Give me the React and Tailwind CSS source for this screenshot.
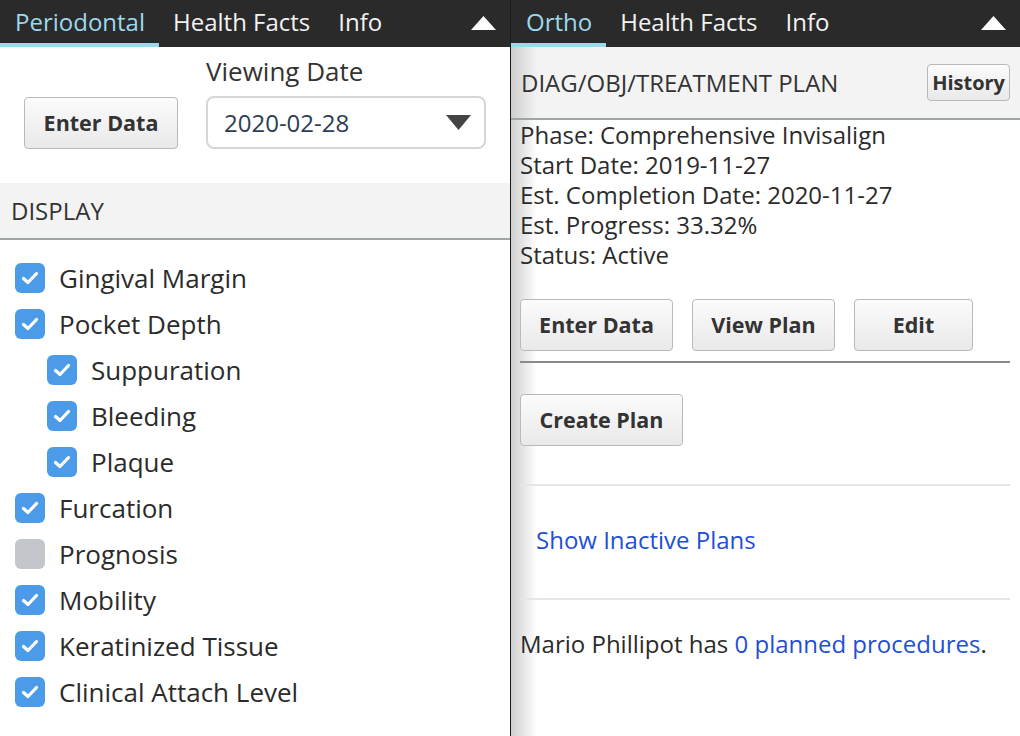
import React from "react";

const font = { fontFamily: "'Open Sans', 'Noto Sans', sans-serif" };

function Tab({ label, active, first }) {
  return (
    <div
      className={`flex h-full items-center border-b-4 ${first ? "pl-[15px] pr-[14px]" : "px-[14px]"} ${
        active ? "border-[#9dd8ec] text-[#9dd8ec]" : "border-transparent text-[#f2f2f2]"
      }`}
    >
      <span className="text-[24px] leading-none">{label}</span>
    </div>
  );
}

function TabBar({ tabs }) {
  return (
    <div className="flex h-[47px] shrink-0 items-stretch bg-[#2a2a2a]">
      {tabs.map((t, i) => (
        <Tab key={t} label={t} active={i === 0} first={i === 0} />
      ))}
      <div className="ml-auto flex items-center pb-[2px] pr-[14px]">
        <svg width="25" height="14" viewBox="0 0 25 14">
          <polygon points="12.5,0 25,14 0,14" fill="#ffffff" />
        </svg>
      </div>
    </div>
  );
}

function Btn({ children, className = "" }) {
  return (
    <button
      className={`shrink-0 rounded-[4px] border border-[#b9b9b9] bg-[linear-gradient(to_bottom,#fbfbfb,#e9e9e9)] text-[21.5px] font-bold text-[#333] ${className}`}
    >
      {children}
    </button>
  );
}

function Check({ checked }) {
  return (
    <span
      className={`flex h-[30px] w-[30px] shrink-0 items-center justify-center rounded-[6px] ${
        checked ? "bg-[#4b9be9]" : "bg-[#c3c7cb]"
      }`}
    >
      {checked && (
        <svg width="18" height="14" viewBox="0 0 18 14">
          <path d="M2.5 7.5 L7 11.5 L15.5 2.5" fill="none" stroke="#fff" strokeWidth="3.2" strokeLinecap="round" strokeLinejoin="round" />
        </svg>
      )}
    </span>
  );
}

const items = [
  ["Gingival Margin", true, false],
  ["Pocket Depth", true, false],
  ["Suppuration", true, true],
  ["Bleeding", true, true],
  ["Plaque", true, true],
  ["Furcation", true, false],
  ["Prognosis", false, false],
  ["Mobility", true, false],
  ["Keratinized Tissue", true, false],
  ["Clinical Attach Level", true, false],
];

function LeftPanel() {
  return (
    <div className="flex w-[510px] shrink-0 flex-col bg-white">
      <TabBar tabs={["Periodontal", "Health Facts", "Info"]} />
      <div className="flex shrink-0 items-end gap-[28px] pl-[24px] pt-[6px]">
        <Btn className="h-[52px] w-[154px]">Enter Data</Btn>
        <div className="flex flex-col">
          <div className="mb-[7px] text-[26px] leading-[36px] text-[#333]">Viewing Date</div>
          <div className="flex h-[53px] w-[280px] items-center justify-between rounded-[8px] border-2 border-[#d6d6d6] bg-white pl-[16px] pr-[13px]">
            <span className="text-[24px] text-[#2c3e55]">2020-02-28</span>
            <svg width="25" height="15" viewBox="0 0 25 15">
              <polygon points="0,0 25,0 12.5,15" fill="#444" />
            </svg>
          </div>
        </div>
      </div>
      <div className="mt-[34px] flex h-[57px] shrink-0 items-center border-b-2 border-[#9ba7a6] bg-[#f3f3f3] pl-[11px]">
        <span className="text-[24px] text-[#333]">DISPLAY</span>
      </div>
      <div className="flex shrink-0 flex-col pt-[15px]">
        {items.map(([label, checked, indent]) => (
          <div
            key={label}
            className={`flex h-[46px] items-center gap-[14px] ${indent ? "pl-[47px]" : "pl-[15px]"}`}
          >
            <Check checked={checked} />
            <span className="text-[26px] leading-none text-[#2b2b2b]">{label}</span>
          </div>
        ))}
      </div>
    </div>
  );
}

function RightPanel() {
  return (
    <div className="flex flex-1 flex-col border-l border-[#1c1c1c] bg-[linear-gradient(to_right,#cfcfcf,#ffffff_26px)]">
      <TabBar tabs={["Ortho", "Health Facts", "Info"]} />
      <div className="flex h-[73px] shrink-0 items-center justify-between border-b-2 border-[#9ba7a6] bg-[linear-gradient(to_right,#cdcdcd,#f3f3f3_26px)] pl-[10px] pr-[10px]">
        <span className="text-[24px] text-[#333]">DIAG/OBJ/TREATMENT PLAN</span>
        <button className="h-[37px] rounded-[4px] border border-[#b9b9b9] bg-[linear-gradient(to_bottom,#fbfbfb,#e9e9e9)] px-[4px] text-[20px] font-bold leading-none text-[#333]">
          History
        </button>
      </div>
      <div className="flex flex-col pl-[9px] pr-[10px] text-[24px] leading-[30px] text-[#2b2b2b]">
        <div>Phase: Comprehensive Invisalign</div>
        <div>Start Date: 2019-11-27</div>
        <div>Est. Completion Date: 2020-11-27</div>
        <div>Est. Progress: 33.32%</div>
        <div>Status: Active</div>
        <div className="mt-[29px] flex gap-[19px]">
          <Btn className="h-[52px] w-[153px]">Enter Data</Btn>
          <Btn className="h-[52px] w-[143px]">View Plan</Btn>
          <Btn className="h-[52px] w-[119px]">Edit</Btn>
        </div>
        <div className="mt-[10px] h-[2px] bg-[#8a8a8a]" />
        <div className="mt-[31px] flex">
          <Btn className="h-[52px] w-[163px]">Create Plan</Btn>
        </div>
        <div className="mt-[38px] h-[2px] bg-[#e3e7ea]" />
        <div className="flex h-[112px] items-center pb-[4px] pl-[16px] text-[#1f4fd6]">Show Inactive Plans</div>
        <div className="h-[2px] bg-[#e3e7ea]" />
        <div className="flex h-[92px] items-center pb-[4px]">
          <span>
            Mario Phillipot has <span className="text-[#1f4fd6]">0 planned procedures</span>.
          </span>
        </div>
      </div>
    </div>
  );
}

export default function App() {
  return (
    <div className="flex h-[736px] w-[1020px] overflow-hidden bg-white" style={font}>
      <LeftPanel />
      <RightPanel />
    </div>
  );
}
